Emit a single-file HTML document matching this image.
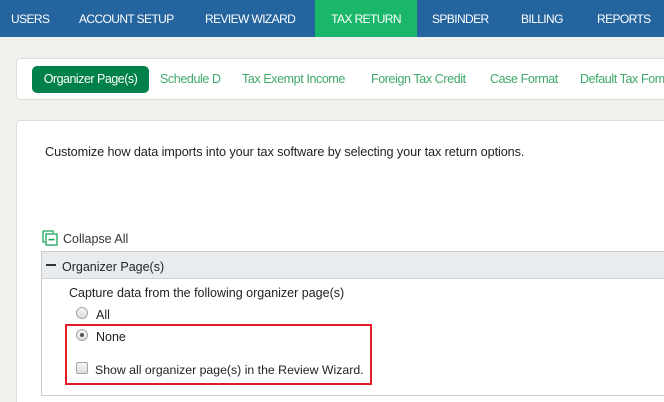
<!DOCTYPE html>
<html><head><meta charset="utf-8"><style>
*{margin:0;padding:0;box-sizing:border-box}
html,body{width:664px;height:402px;overflow:hidden}
body{background:#f0f0ec;font-family:"Liberation Sans",sans-serif;position:relative}
.nav{position:absolute;left:0;top:0;width:664px;height:37px;background:#24649f}
.nav span{position:absolute;top:0;height:37px;line-height:38px;color:#fff;font-size:12px;letter-spacing:-0.6px;white-space:nowrap}
.nav .act{background:#1ab76b}
.sub{position:absolute;left:16px;top:58px;width:700px;height:42px;background:#fff;border:1px solid #dcdcd8;border-radius:4px}
.sub span{position:absolute;top:13px;color:#3fa86a;font-size:12.5px;letter-spacing:-0.4px;white-space:nowrap;line-height:14px}
.sub span.pill{left:15px;top:7px;width:117px;height:27px;background:#00814b;border-radius:5px;color:#fff;line-height:27px;text-align:center;font-size:12.5px;letter-spacing:-0.5px}
.main{position:absolute;left:16px;top:120px;width:700px;height:300px;background:#fff;border:1px solid #dcdcd8;border-radius:4px}
.t{position:absolute;white-space:nowrap;color:#222;font-size:12.5px}
.box{position:absolute;left:41px;top:251px;width:640px;height:145px;border:1px solid #ccc}
.hdr{position:absolute;left:0;top:0;width:100%;height:27px;background:#e9ecef;border-bottom:1px solid #d3d3d3}
.red{position:absolute;left:65px;top:324px;width:307px;height:61px;border:2px solid #e21b26}
.radio{position:absolute;width:12px;height:12px;border-radius:50%;border:1px solid #a5a5a5;background:linear-gradient(#f4f4f4,#dedede)}
.chk{position:absolute;width:12px;height:12px;border-radius:2px;border:1px solid #a5a5a5;background:linear-gradient(#f4f4f4,#dedede)}
</style></head><body>
<div class="nav">
<span style="left:11px">USERS</span>
<span style="left:79px">ACCOUNT SETUP</span>
<span style="left:205px">REVIEW WIZARD</span>
<span class="act" style="left:315px;width:102px;text-align:center">TAX RETURN</span>
<span style="left:432px">SPBINDER</span>
<span style="left:521px">BILLING</span>
<span style="left:597px">REPORTS</span>
</div>
<div class="sub">
<span class="pill">Organizer Page(s)</span>
<span style="left:143px">Schedule D</span>
<span style="left:225px">Tax Exempt Income</span>
<span style="left:354px">Foreign Tax Credit</span>
<span style="left:473px">Case Format</span>
<span style="left:563px">Default Tax Form</span>
</div>
<div class="main"></div>
<div class="t" style="left:45px;top:145px;font-size:12.7px;letter-spacing:-0.1px">Customize how data imports into your tax software by selecting your tax return options.</div>
<svg style="position:absolute;left:42px;top:230px" width="17" height="16" viewBox="0 0 17 16"><path d="M1 1h10v2M1 1v11h2" fill="none" stroke="#1aa35a" stroke-width="1.3"/><rect x="4" y="4" width="11" height="11" fill="#fff" stroke="#1aa35a" stroke-width="1.3"/><rect x="6.5" y="8.8" width="6" height="1.6" fill="#1aa35a"/></svg>
<div class="t" style="left:63px;top:232px;color:#333">Collapse All</div>
<div class="box"><div class="hdr"></div></div>
<div style="position:absolute;left:46px;top:264px;width:10px;height:2px;background:#333"></div>
<div class="t" style="left:62px;top:260px">Organizer Page(s)</div>
<div class="t" style="left:69px;top:286px">Capture data from the following organizer page(s)</div>
<div class="radio" style="left:76px;top:307px"></div>
<div class="t" style="left:96px;top:308px">All</div>
<div class="red"></div>
<div class="radio" style="left:76px;top:329px"><div style="position:absolute;left:3px;top:3px;width:4px;height:4px;border-radius:50%;background:#555"></div></div>
<div class="t" style="left:96px;top:330px">None</div>
<div class="chk" style="left:76px;top:362px"></div>
<div class="t" style="left:95px;top:363px;font-size:12.3px">Show all organizer page(s) in the Review Wizard.</div>
</body></html>
